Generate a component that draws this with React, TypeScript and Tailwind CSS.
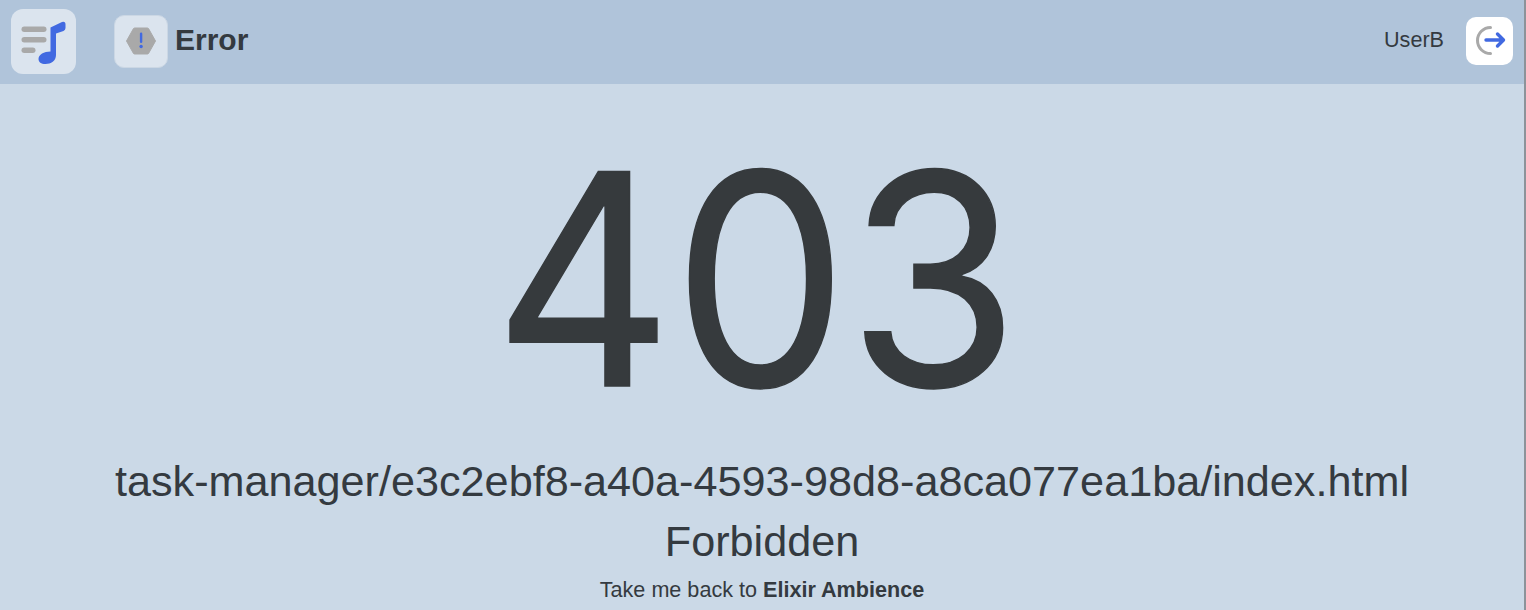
import React from 'react';

const App: React.FC = () => {
  return (
    <div className="h-[610px] w-full overflow-hidden bg-[#cbd9e7] text-[#343a40] font-['Liberation_Sans',Arial,sans-serif] border-r-2 border-[#8c939a]">
      <header className="flex h-[84px] items-center justify-between bg-[#b0c4da] pl-[11px] pr-[11px]">
        <div className="flex items-center">
          <div className="mt-[-1px] flex h-[65px] w-[65px] items-center justify-center rounded-[12px] bg-[#dbe4ee]">
            <svg width="48" height="48" viewBox="0 0 48 48">
              <rect x="1.5" y="8.5" width="25" height="5.5" rx="2.75" fill="#a9a9a9" />
              <rect x="1.5" y="19" width="25" height="5.5" rx="2.75" fill="#a9a9a9" />
              <rect x="1.5" y="29.5" width="14" height="5.5" rx="2.75" fill="#a9a9a9" />
              <path d="M30.5 9.5 L42 4 Q45.5 3 45.5 6.5 L45.5 10 Q45.5 12 43.5 13 L36 15.5 L36 37 C36 43 31 46 25.5 46 C21 46 18.5 44 18.5 41 C18.5 36.5 24 33.5 30.5 33.5 Z" fill="#4169e1" />
            </svg>
          </div>
          <div className="ml-[38px] mt-[-2px] flex h-[53px] w-[54px] items-center justify-center rounded-[10px] border border-[#cbd7e4] bg-[#dbe4ee]">
            <svg width="32" height="28" viewBox="0 0 32 28">
              <path d="M1.5 14 L8.5 1.5 Q9 1 10 1 L22 1 Q23 1 23.5 1.5 L30.5 14 L23.5 26.5 Q23 27 22 27 L10 27 Q9 27 8.5 26.5 Z" fill="#a9a9a9" stroke="#a9a9a9" strokeWidth="1" strokeLinejoin="round" />
              <rect x="14.9" y="5.5" width="2.4" height="10.5" rx="1.2" fill="#4169e1" />
              <circle cx="16.1" cy="19.5" r="1.7" fill="#4169e1" />
            </svg>
          </div>
          <h1 className="ml-[7px] mt-[-4px] text-[30px] font-bold leading-none">Error</h1>
        </div>
        <div className="flex items-center">
          <span className="mt-[-4px] text-[21.6px] leading-none">UserB</span>
          <div className="ml-[22px] mt-[-2px] flex h-[48px] w-[47px] items-center justify-center rounded-[10px] bg-white">
            <svg width="32" height="32" viewBox="0 0 32 32">
              <path d="M16.5 2.5 A13 13 0 0 0 16.5 28.5" fill="none" stroke="#a9a9a9" strokeWidth="3" strokeLinecap="round" />
              <path d="M12 15 L29 15 M23.5 9 L29.5 15 L23.5 21" fill="none" stroke="#4169e1" strokeWidth="3.4" strokeLinecap="round" strokeLinejoin="round" />
            </svg>
          </div>
        </div>
      </header>
      <main className="flex flex-col items-center text-center">
        <div className="mr-[11px] mt-[43px] h-[304px] scale-x-[0.94] font-['Inter',sans-serif] text-[295px] leading-[304px] text-[#363a3d] [-webkit-text-stroke:1.5px_#363a3d]">403</div>
        <div className="mt-[20px] text-[43.2px] leading-[60px]">task-manager/e3c2ebf8-a40a-4593-98d8-a8ca077ea1ba/index.html</div>
        <div className="text-[43.2px] leading-[60px]">Forbidden</div>
        <div className="mt-[5px] text-[21.6px] leading-[28px]">Take me back to <b>Elixir Ambience</b></div>
      </main>
    </div>
  );
};

export default App;
